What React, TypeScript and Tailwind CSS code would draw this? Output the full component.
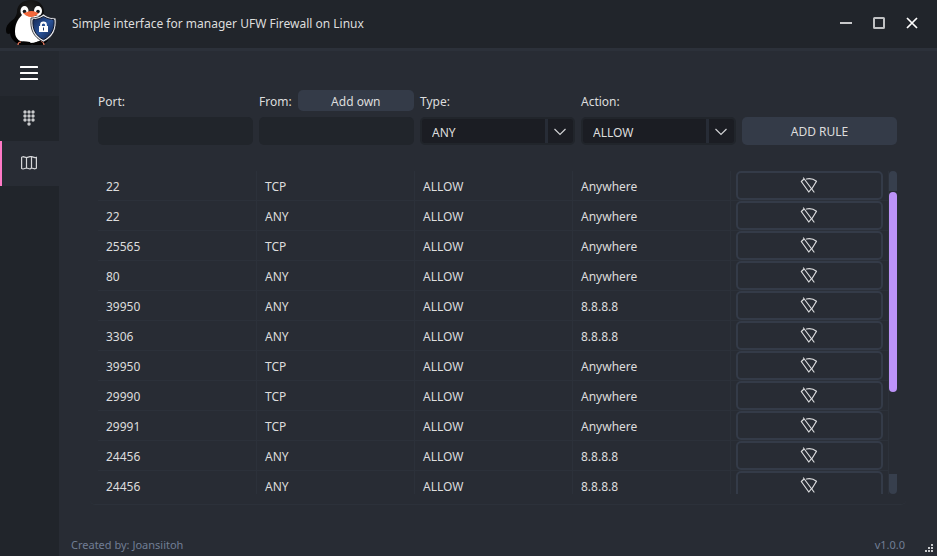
import type { ReactNode } from "react";

type Rule = { port: string; protocol: string; action: string; from: string };

const rules: Rule[] = [
  { port: "22", protocol: "TCP", action: "ALLOW", from: "Anywhere" },
  { port: "22", protocol: "ANY", action: "ALLOW", from: "Anywhere" },
  { port: "25565", protocol: "TCP", action: "ALLOW", from: "Anywhere" },
  { port: "80", protocol: "ANY", action: "ALLOW", from: "Anywhere" },
  { port: "39950", protocol: "ANY", action: "ALLOW", from: "8.8.8.8" },
  { port: "3306", protocol: "ANY", action: "ALLOW", from: "8.8.8.8" },
  { port: "39950", protocol: "TCP", action: "ALLOW", from: "Anywhere" },
  { port: "29990", protocol: "TCP", action: "ALLOW", from: "Anywhere" },
  { port: "29991", protocol: "TCP", action: "ALLOW", from: "Anywhere" },
  { port: "24456", protocol: "ANY", action: "ALLOW", from: "8.8.8.8" },
  { port: "24456", protocol: "ANY", action: "ALLOW", from: "8.8.8.8" },
];

function PenguinLogo() {
  return (
    <svg width="52" height="48" viewBox="0 0 52 48" aria-hidden="true">
      <defs>
        <linearGradient id="shield" x1="0" y1="0" x2="1" y2="1">
          <stop offset="0" stopColor="#14264f" />
          <stop offset="0.500" stopColor="#2a549c" />
          <stop offset="1" stopColor="#0c1a3c" />
        </linearGradient>
        <radialGradient id="coat" cx="0.500" cy="0.200" r="0.600">
          <stop offset="0" stopColor="#222" />
          <stop offset="0.600" stopColor="#0c0c0c" />
          <stop offset="1" stopColor="#000" />
        </radialGradient>
      </defs>
      <path d="M8 19C3 22 0 26 0 30c0 3 1 4 3 4l7-5Z" fill="#050505" />
      <path d="M25 0C16 0 11 5 11 12c0 5-7 9-7 20 0 6 4 10 9 12h25c5-3 7-8 5-14-1-7-5-12-5-18C38 5 33 0 25 0Z" fill="url(#coat)" />
      <path d="M16 15c-5 5-7 10-7 17 0 7 5 11 15 11s14-4 14-12c0-6-2-11-5-15Z" fill="#fff" />
      <ellipse cx="18.500" cy="11" rx="4" ry="5" fill="#fff" />
      <ellipse cx="32" cy="11" rx="4" ry="5" fill="#fff" />
      <circle cx="18.500" cy="11.500" r="1.800" fill="#16181c" />
      <circle cx="32" cy="11.500" r="1.800" fill="#16181c" />
      <path d="M17 13c3 0 5-2 8.500-2s5.500 2 7.500 2c-2 2-5 4-8 4s-6-2-8-4Z" fill="#f2683c" />
      <path d="M12 45c1-5 6-4 12-3l2 3c4-5 12-5 12 0Z" fill="#060606" />
      <path d="M12 45c0-2 1-3 3-3M35 41q3 1 3 4" fill="none" stroke="#e9785c" strokeWidth="1.200" />
      <path d="M37.500 14c4 3 8 4 12.500 4 1 11-2 19-12.500 24-10.500-5-13.500-13-12.500-24 4.500 0 8.500-1 12.500-4Z" fill="#e7e8ec" stroke="#17191f" strokeWidth="0.800" />
      <path d="M37.500 16.500c3.500 2.200 7 3 10.500 3.200.7 9-2 15.500-10.500 20-8.500-4.500-11.200-11-10.500-20 3.500-.2 7-1 10.500-3.200Z" fill="url(#shield)" stroke="#10182c" strokeWidth="1" />
      <path d="M35 27v-2a2.500 2.500 0 0 1 5 0v2" fill="none" stroke="#fff" strokeWidth="1.800" />
      <path d="M33 26h9v6h-9Z" fill="#fff" />
      <path d="M37 27.500h1v3h-1Z" fill="#1d3467" />
    </svg>
  );
}

function MenuIcon() {
  return (
    <svg width="20" height="16" viewBox="0 0 20 16" fill="#fff" aria-hidden="true">
      <rect x="1" y="1" width="18" height="2" rx="0.500" />
      <rect x="1" y="7" width="18" height="2" rx="0.500" />
      <rect x="1" y="13" width="18" height="2" rx="0.500" />
    </svg>
  );
}

function DialpadIcon() {
  const dots = [0, 4, 8].flatMap((y) => [0, 4, 8].map((x) => [x, y]));
  return (
    <svg width="12" height="16" viewBox="0 0 12 16" fill="#c9cacc" aria-hidden="true">
      {dots.map(([x, y]) => (
        <circle key={`${x}-${y}`} cx={x + 2} cy={y + 2} r="1.700" />
      ))}
      <circle cx="6" cy="14" r="1.700" />
    </svg>
  );
}

function MapIcon() {
  return (
    <svg width="16" height="14" viewBox="0 0 16 14" fill="none" stroke="#d5d6d8" strokeWidth="1.200" strokeLinejoin="round" aria-hidden="true">
      <path d="M.6 1.200L2 .7L5.500 1.700L9 .7L10.500 .7L14 1.700L15.400 1.200V12.300L14 12.800L10.500 12L9 13L5.500 12L2 13L.6 12.500ZM5.500 1.700V12M10.500 .7V12" />
    </svg>
  );
}

function WifiOffIcon() {
  return (
    <svg width="18" height="16" viewBox="0 0 18 16" fill="none" stroke="#dcdddf" strokeWidth="1.200" strokeLinecap="round" strokeLinejoin="round" aria-hidden="true">
      <path d="M3.500 1L14 15M6.500 2Q12 .8 16.500 4.300L12 11.500M3.500 2.500L1.300 4.500L8.800 15L10.800 12.500" />
    </svg>
  );
}

function Chevron() {
  return (
    <svg width="12" height="8" viewBox="0 0 12 8" fill="none" stroke="#d0d1d3" strokeWidth="1.200" aria-hidden="true">
      <path d="M0.500 1L6 6.500L11.500 1" />
    </svg>
  );
}

function Dropdown({ id, options }: { id: string; options: string[] }) {
  return (
    <div className="relative h-7">
      <select
        id={id}
        className="h-full w-full appearance-none rounded-[5px] border-2 border-[#21252b] bg-[#1b1d23] pt-[3px] pl-[10px] text-xs text-[#dddddd] outline-none"
      >
        {options.map((option) => (
          <option key={option}>{option}</option>
        ))}
      </select>
      <span className="pointer-events-none absolute inset-y-[2px] right-[2px] flex w-[28px] items-center justify-center border-l-3 border-[#272c36] pt-px pr-[2px]">
        <Chevron />
      </span>
    </div>
  );
}

function Cell({ children }: { children: ReactNode }) {
  return <td className="border-r border-b border-[#2c313a] pt-[2px] pb-0 pl-2">{children}</td>;
}

export default function App() {
  const field = "h-7 w-full rounded-[5px] bg-[#21252b] px-[10px] outline-none";
  const label = "h-[21px] pt-[2px] leading-[19px]";
  const windowButton = "flex size-7 items-center justify-center";
  return (
    <div className="flex h-screen flex-col overflow-hidden bg-[#282c34] font-['Noto_Sans',sans-serif] text-xs leading-5 text-[#dddddd]">
      <header className="flex h-[51px] shrink-0 items-center border-b-3 border-[#2c313a] bg-[#21252b] pr-[11px]">
        <div className="w-[66px] shrink-0 pl-[6px]">
          <PenguinLogo />
        </div>
        <h1 className="flex-1 pl-[6px]">Simple interface for manager UFW Firewall on Linux</h1>
        <div className="flex gap-[5px] pb-[2px]">
          <button aria-label="Minimize" className={windowButton}>
            <svg width="14" height="14" viewBox="0 0 14 14"><path d="M1 6h12v2H1Z" fill="#c8c9cb" /></svg>
          </button>
          <button aria-label="Maximize" className={windowButton}>
            <svg width="14" height="14" viewBox="0 0 14 14"><rect x="2" y="2" width="10" height="10" rx="0.500" fill="none" stroke="#c0c1c3" strokeWidth="2" /></svg>
          </button>
          <button aria-label="Close" className={windowButton}>
            <svg width="14" height="14" viewBox="0 0 14 14"><path d="M2 2L12 12M12 2L2 12" fill="none" stroke="#fff" strokeWidth="1.700" /></svg>
          </button>
        </div>
      </header>

      <div className="flex min-h-0 flex-1">
        <nav className="flex w-[59px] shrink-0 flex-col bg-[#21252b]">
          <button aria-label="Toggle menu" className="flex h-[45px] items-center justify-center bg-[#252930] pr-px pb-px">
            <MenuIcon />
          </button>
          <button aria-label="Ports" className="flex h-[45px] items-center justify-center pr-px pb-px">
            <DialpadIcon />
          </button>
          <button aria-label="Rules" className="flex h-[45px] items-center justify-center border-l-2 border-[#ff79c6] bg-[#282c34] pr-[3px] pb-px">
            <MapIcon />
          </button>
        </nav>

        <div className="flex min-w-0 flex-1 flex-col">
          <main className="mt-[39px] mr-8 ml-8 flex min-h-0 flex-1 flex-col px-[7px]">
            <form className="grid shrink-0 grid-cols-5 gap-[6px] pr-px" onSubmit={(event) => event.preventDefault()}>
              <div className="flex flex-col gap-[6px]">
                <label htmlFor="port" className={label}>Port:</label>
                <input id="port" className={field} />
              </div>
              <div className="flex flex-col gap-[6px]">
                <div className="flex h-[21px] gap-[6px]">
                  <label htmlFor="from" className={label}>From:</label>
                  <button type="button" className="flex-1 rounded-[5px] bg-[#343b48] pt-[2px] leading-[19px]">Add own</button>
                </div>
                <input id="from" className={field} />
              </div>
              <div className="flex flex-col gap-[6px]">
                <label htmlFor="type" className={label}>Type:</label>
                <Dropdown id="type" options={["ANY", "TCP", "UDP"]} />
              </div>
              <div className="flex flex-col gap-[6px]">
                <label htmlFor="action" className={label}>Action:</label>
                <Dropdown id="action" options={["ALLOW", "DENY"]} />
              </div>
              <button className="h-7 self-end rounded-[5px] bg-[#343b48] pt-[2px]">ADD RULE</button>
            </form>

            <section className="-mx-2 mt-4 min-h-0 flex-1 rounded-[5px] border-b border-[#2c313a] px-2 pt-[10px] pb-[10px]">
              <div className="flex h-full pr-px">
                <div className="min-w-0 flex-1 overflow-hidden">
                  <table className="w-full table-fixed border-separate border-spacing-0">
                    <colgroup>
                      <col className="w-[159px]" />
                      <col />
                      <col />
                      <col />
                      <col />
                    </colgroup>
                    <tbody>
                      {rules.map((rule, index) => (
                        <tr key={index} className="h-[30px]">
                          <Cell>{rule.port}</Cell>
                          <Cell>{rule.protocol}</Cell>
                          <Cell>{rule.action}</Cell>
                          <Cell>{rule.from}</Cell>
                          <td className="border-r border-b border-[#2c313a] px-[5px] py-0">
                            <button
                              aria-label={`Remove rule for port ${rule.port}`}
                              className="flex h-[29px] w-full items-center justify-center rounded-[5px] border-2 border-[#343b48] pr-px pb-[2px]"
                            >
                              <WifiOffIcon />
                            </button>
                          </td>
                        </tr>
                      ))}
                    </tbody>
                  </table>
                </div>
                <div className="flex w-2 flex-col bg-[#282c34]">
                  <div className="h-5 rounded-t-[4px] bg-[#373f4d]" />
                  <div className="mt-px h-[200px] rounded-[4px] bg-[#bd93f9]" />
                  <div className="mt-auto h-5 rounded-b-[4px] bg-[#373f4d]" />
                </div>
              </div>
            </section>
          </main>

          <footer className="mt-[29px] flex h-[22px] shrink-0 items-center justify-between pr-[3px] pl-3 text-[11px] text-[#717e95]">
            <span>Created by: Joansiitoh</span>
            <span className="flex items-center gap-5">
              v1.0.0
              <svg width="9" height="9" viewBox="0 0 9 9" fill="#c8c9cb" className="mt-[6px]" aria-hidden="true">
                <path d="M6 0h2v2H6ZM3 3h2v2H3ZM6 3h2v2H6ZM0 6h2v2H0ZM3 6h2v2H3ZM6 6h2v2H6Z" />
              </svg>
            </span>
          </footer>
        </div>
      </div>
    </div>
  );
}
